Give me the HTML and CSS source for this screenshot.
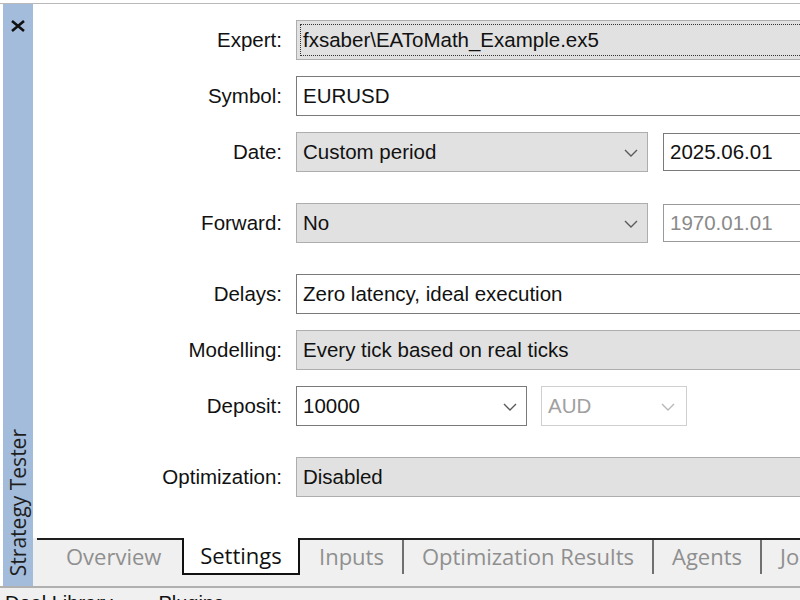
FILE: index.html
```html
<!DOCTYPE html>
<html lang="en">
<head>
  <meta charset="UTF-8">
  <title>Strategy Tester</title>
  <link rel="stylesheet" href="styles.css">
</head>
<body>
  <div class="tester">
    <div class="sidebar">
      <svg class="close" width="16" height="12" viewBox="0 0 16 12">
        <path d="M2 1l12 10M14 1L2 11" stroke="#111" stroke-width="2.6" fill="none"/>
      </svg>
      <div class="sidebar-title">Strategy Tester</div>
    </div>

    <div class="main">
      <div class="form">
        <div class="row">
          <label>Expert:</label>
          <div class="field gray wide"><span class="focus">fxsaber\EAToMath_Example.ex5</span></div>
        </div>
        <div class="row">
          <label>Symbol:</label>
          <div class="field white wide">EURUSD</div>
        </div>
        <div class="row">
          <label>Date:</label>
          <div class="field gray combo date-combo">Custom period
            <svg class="chev" width="14" height="8" viewBox="0 0 14 8"><path d="M1 1l6 6 6-6"/></svg>
          </div>
          <div class="field white date">2025.06.01</div>
        </div>
        <div class="row spaced">
          <label>Forward:</label>
          <div class="field gray combo date-combo">No
            <svg class="chev" width="14" height="8" viewBox="0 0 14 8"><path d="M1 1l6 6 6-6"/></svg>
          </div>
          <div class="field white date off">1970.01.01</div>
        </div>
        <div class="row spaced">
          <label>Delays:</label>
          <div class="field white wide">Zero latency, ideal execution</div>
        </div>
        <div class="row">
          <label>Modelling:</label>
          <div class="field gray wide">Every tick based on real ticks</div>
        </div>
        <div class="row">
          <label>Deposit:</label>
          <div class="field white combo deposit">10000
            <svg class="chev" width="14" height="8" viewBox="0 0 14 8"><path d="M1 1l6 6 6-6"/></svg>
          </div>
          <div class="field combo currency off">AUD
            <svg class="chev" width="14" height="8" viewBox="0 0 14 8"><path d="M1 1l6 6 6-6"/></svg>
          </div>
        </div>
        <div class="row spaced">
          <label>Optimization:</label>
          <div class="field gray wide">Disabled</div>
        </div>
      </div>

      <div class="tabs">
        <div class="tab first">Overview</div>
        <div class="tab active">Settings</div>
        <div class="tab after-active">Inputs</div>
        <span class="sep"></span>
        <div class="tab">Optimization Results</div>
        <span class="sep"></span>
        <div class="tab">Agents</div>
        <span class="sep"></span>
        <div class="tab last">Journal</div>
      </div>
    </div>
  </div>

  <div class="status">
    <span>Deal Library</span>
    <span class="status-next">Plugins</span>
  </div>
</body>
</html>
```

FILE: styles.css
```css
html, body {
  margin: 0;
  height: 100%;
}
body {
  width: 800px;
  height: 600px;
  overflow: hidden;
  background: #fff;
  font-family: "Liberation Sans", Arial, sans-serif;
  color: #111;
}
.tester {
  display: flex;
  height: 583px;
  margin-top: 3px;
  border-top: 1px solid #b9b9b9;
  box-sizing: border-box;
}
.sidebar {
  width: 30px;
  margin-left: 3px;
  flex-shrink: 0;
  background: #a3bcdb;
  display: flex;
  flex-direction: column;
  align-items: center;
  justify-content: space-between;
  padding: 16px 0 10px;
  box-sizing: border-box;
}
.sidebar-title {
  writing-mode: vertical-rl;
  transform: rotate(180deg);
  font-family: "Open Sans", sans-serif;
  font-size: 21px;
  line-height: 26px;
  color: #1e1e1e;
  white-space: nowrap;
}
.main {
  flex: 1;
  min-width: 0;
  display: flex;
  flex-direction: column;
  overflow: hidden;
}
.form {
  flex: 1;
  display: flex;
  flex-direction: column;
  padding-top: 16px;
}
.row {
  display: flex;
  align-items: center;
  height: 40px;
  margin-bottom: 16px;
}
.row.spaced {
  margin-top: 15px;
}
.row label {
  width: 249px;
  flex-shrink: 0;
  margin-right: 14px;
  text-align: right;
  font-size: 20.5px;
}
.field {
  position: relative;
  flex-shrink: 0;
  height: 40px;
  box-sizing: border-box;
  padding: 0 6px;
  display: flex;
  align-items: center;
  font-size: 20.5px;
  white-space: nowrap;
}
.field.gray {
  background: #e1e1e1;
  border: 1px solid #adadad;
}
.field.white {
  background: #fff;
  border: 1px solid #7a7a7a;
}
.wide {
  width: 620px;
}
.focus {
  display: flex;
  align-items: center;
  height: 32px;
  margin-left: -3px;
  padding-left: 2px;
  width: 100%;
  border: 1px dotted #333;
  box-sizing: border-box;
}
.combo .chev {
  position: absolute;
  top: 16px;
  right: 9px;
}
.chev path {
  fill: none;
  stroke: #5a5a5a;
  stroke-width: 1.4;
}
.date-combo {
  width: 352px;
  margin-right: 15px;
}
.date {
  width: 200px;
  height: 38px;
}
.date.off {
  color: #8a8a8a;
  border-color: #9a9a9a;
}
.deposit {
  width: 231px;
  margin-right: 14px;
}
.currency {
  width: 146px;
  border: 1px solid #cfcfcf;
  color: #a0a0a0;
}
.currency .chev {
  right: 11px;
}
.currency .chev path {
  stroke: #b8b8b8;
}
.tabs {
  display: flex;
  align-items: flex-start;
  height: 48px;
  padding-left: 4px;
  background: #f0f0f0;
  font-family: "Open Sans", sans-serif;
  font-size: 22px;
  color: #8f8f8f;
  white-space: nowrap;
}
.tab {
  flex-shrink: 0;
  height: 37px;
  box-sizing: border-box;
  border-top: 2px solid #1e1e1e;
  display: flex;
  align-items: center;
  padding: 0 18px 3px;
}
.tab.first {
  width: 145px;
  padding-left: 29px;
}
.tab.active {
  width: 118px;
  justify-content: center;
  padding: 0 0 1px;
  background: #fff;
  color: #111;
  border: 2px solid #111;
  border-top: none;
}
.tab.after-active {
  padding-left: 19px;
}
.tab.last {
  flex: 1;
}
.sep {
  flex-shrink: 0;
  width: 2px;
  height: 34px;
  border-top: 2px solid #1e1e1e;
  background: #707070;
}
.status {
  height: 14px;
  border-top: 2px solid #b0b0b0;
  background: #f0f0f0;
  padding: 3px 0 0 5px;
  font-size: 20px;
  line-height: 24px;
  color: #111;
  white-space: nowrap;
}
.status-next {
  margin-left: 40px;
}
```
